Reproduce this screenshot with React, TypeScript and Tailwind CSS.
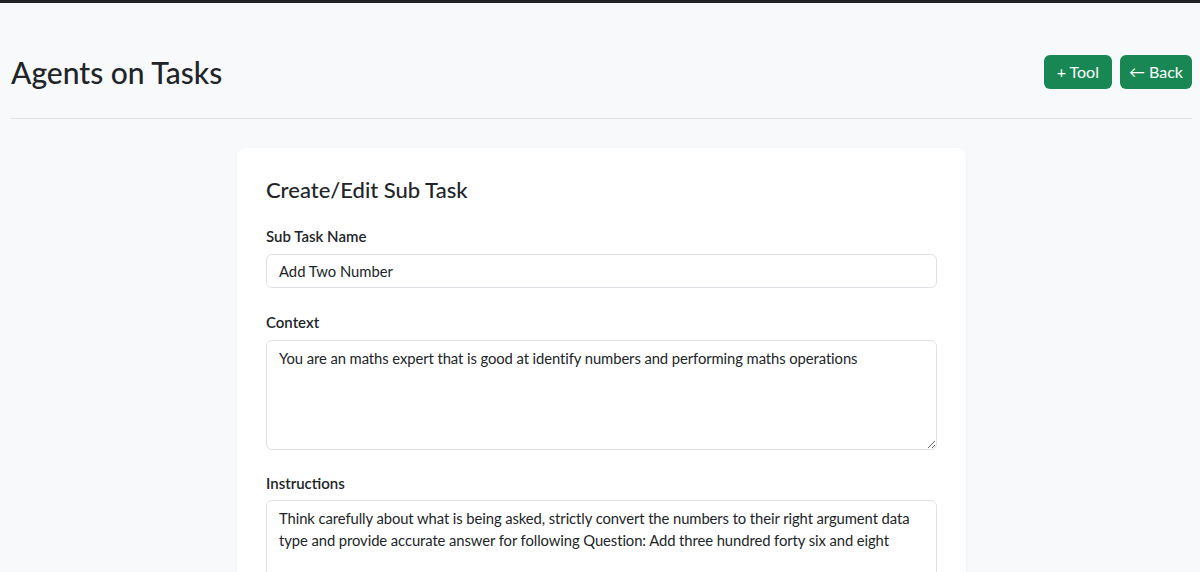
import { useState } from 'react';

const font = { fontFamily: 'Lato, "Noto Sans", sans-serif' };

export default function App() {
  const [name, setName] = useState('Add Two Number');
  const [context, setContext] = useState(
    'You are an maths expert that is good at identify numbers and performing maths operations'
  );
  const [instructions, setInstructions] = useState(
    'Think carefully about what is being asked, strictly convert the numbers to their right argument data type and provide accurate answer for following Question: Add three hundred forty six and eight'
  );

  return (
    <div className="min-h-screen bg-[#f8f9fa] text-[#212529] border-t-[3px] border-[#222]" style={font}>
      <div className="ml-[11px] mr-[8px]">
        {/* Header */}
        <div className="flex items-center justify-between pt-[51px]">
          <h1 className="text-[30px] leading-[36px] font-medium">Agents on Tasks</h1>
          <div className="flex gap-2">
            <button className="h-[34px] px-[13px] rounded-md bg-[#198754] text-white text-[16px]">+ Tool</button>
            <button className="h-[34px] px-[9px] rounded-md bg-[#198754] text-white text-[16px]">← Back</button>
          </div>
        </div>
        <hr className="mt-[28px] border-[#dee2e6]" />

        {/* Form card */}
        <div className="mx-auto mt-[29px] w-[729px] rounded-lg bg-white px-[29px] pt-[27px] pb-8 shadow-[0_1px_3px_rgba(0,0,0,0.06)]">
          <h4 className="text-[22px] font-medium leading-[29px] mb-[20px]">Create/Edit Sub Task</h4>

          <label className="block text-[15px] font-semibold leading-6 mb-[6px]">Sub Task Name</label>
          <input
            value={name}
            onChange={(e) => setName(e.target.value)}
            className="block w-full h-[34px] rounded-md border border-[#dee2e6] px-3 text-[14.8px] outline-none"
          />

          <label className="block text-[15px] font-semibold leading-6 mt-[22px] mb-[6px]">Context</label>
          <textarea
            value={context}
            onChange={(e) => setContext(e.target.value)}
            className="block w-full h-[110px] rounded-md border border-[#dee2e6] px-3 py-[6px] text-[14.8px] tracking-[-0.08px] leading-[22px] outline-none"
          />

          <label className="block text-[15px] font-semibold leading-6 mt-[21px] mb-[5px]">Instructions</label>
          <textarea
            value={instructions}
            onChange={(e) => setInstructions(e.target.value)}
            className="block w-full h-[110px] rounded-md border border-[#dee2e6] px-3 py-[6px] text-[14.8px] tracking-[-0.08px] leading-[22px] outline-none"
          />
        </div>
      </div>
    </div>
  );
}
